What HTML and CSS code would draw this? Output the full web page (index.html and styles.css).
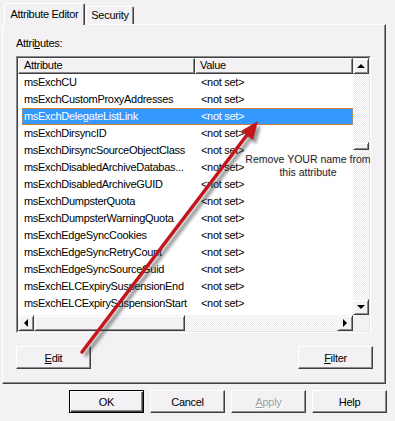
FILE: index.html
```html
<!DOCTYPE html>
<html>
<head>
<meta charset="utf-8">
<title>Properties</title>
<link rel="stylesheet" href="styles.css">
</head>
<body>
<div class="dialog">
  <div class="tabs">
    <div class="tab active">Attribute Editor</div>
    <div class="tab">Security</div>
  </div>
  <div class="panel">
    <div class="label">Attri<u>b</u>utes:</div>
    <div class="listbox">
      <div class="listinner">
        <div class="lv">
          <div class="header">
            <div class="hcell c1">Attribute</div>
            <div class="hcell c2">Value</div>
          </div>
          <div class="rows">
            <div class="row"><span class="a">msExchCU</span><span class="v">&lt;not set&gt;</span></div>
            <div class="row"><span class="a">msExchCustomProxyAddresses</span><span class="v">&lt;not set&gt;</span></div>
            <div class="row sel"><span class="a">msExchDelegateListLink</span><span class="v">&lt;not set&gt;</span></div>
            <div class="row"><span class="a">msExchDirsyncID</span><span class="v">&lt;not set&gt;</span></div>
            <div class="row"><span class="a">msExchDirsyncSourceObjectClass</span><span class="v">&lt;not set&gt;</span></div>
            <div class="row"><span class="a">msExchDisabledArchiveDatabas...</span><span class="v">&lt;not set&gt;</span></div>
            <div class="row"><span class="a">msExchDisabledArchiveGUID</span><span class="v">&lt;not set&gt;</span></div>
            <div class="row"><span class="a">msExchDumpsterQuota</span><span class="v">&lt;not set&gt;</span></div>
            <div class="row"><span class="a">msExchDumpsterWarningQuota</span><span class="v">&lt;not set&gt;</span></div>
            <div class="row"><span class="a">msExchEdgeSyncCookies</span><span class="v">&lt;not set&gt;</span></div>
            <div class="row"><span class="a">msExchEdgeSyncRetryCount</span><span class="v">&lt;not set&gt;</span></div>
            <div class="row"><span class="a">msExchEdgeSyncSourceGuid</span><span class="v">&lt;not set&gt;</span></div>
            <div class="row"><span class="a">msExchELCExpirySuspensionEnd</span><span class="v">&lt;not set&gt;</span></div>
            <div class="row"><span class="a">msExchELCExpirySuspensionStart</span><span class="v">&lt;not set&gt;</span></div>
          </div>
        </div>
        <div class="vscroll">
          <div class="sbtn up"></div>
          <div class="track vtrack"><div class="thumb vthumb"></div></div>
          <div class="sbtn down"></div>
        </div>
        <div class="hscroll">
          <div class="sbtn left"></div>
          <div class="thumb hthumb"></div>
          <div class="track htrack"></div>
          <div class="sbtn right"></div>
        </div>
        <div class="corner"></div>
      </div>
    </div>
    <div class="btnrow">
      <button class="btn"><u>E</u>dit</button>
      <button class="btn"><u>F</u>ilter</button>
    </div>
  </div>
  <div class="footer">
    <button class="btn default">OK</button>
    <button class="btn">Cancel</button>
    <button class="btn disabled"><u>A</u>pply</button>
    <button class="btn">Help</button>
  </div>
  <svg class="overlay" width="395" height="421" viewBox="0 0 395 421">
    <defs>
      <filter id="soft" x="-20%" y="-20%" width="140%" height="140%">
        <feGaussianBlur stdDeviation="1.8"/>
      </filter>
    </defs>
    <g filter="url(#soft)" opacity="0.55" transform="translate(3,4)">
      <line x1="82" y1="352" x2="250" y2="131" stroke="#444" stroke-width="4"/>
      <polygon points="258,121 253,140 241,131" fill="#444"/>
    </g>
    <line x1="82" y1="352" x2="250" y2="131" stroke="#c3161b" stroke-width="3.5" stroke-linecap="round"/>
    <polygon points="258,121 253,140 241,131" fill="#c3161b"/>
  </svg>
  <div class="note">Remove YOUR name from<br>this attribute</div>
</div>
</body>
</html>
```
FILE: styles.css
```css
* { box-sizing: border-box; }
html, body { margin: 0; padding: 0; }
body {
  background: #f4f1f4;
  font-family: "Liberation Sans", Arial, sans-serif;
  font-size: 11px;
  letter-spacing: -0.3px;
  color: #000;
}
.dialog {
  position: relative;
  width: 395px;
  height: 421px;
  overflow: hidden;
}
.tabs {
  display: flex;
  align-items: flex-end;
  height: 24px;
  padding-left: 4px;
}
.tab {
  height: 18px;
  width: 48px;
  margin-left: 1px;
  padding-top: 2px;
  text-align: center;
  line-height: 13px;
  background: #f4f1f4;
  border: 1px solid;
  border-bottom: none;
  border-color: #fff #404040 transparent #fff;
  box-shadow: inset -1px 0 #8c8a8c;
  border-radius: 2px 2px 0 0;
}
.tab.active {
  width: 81px;
  height: 22px;
  margin-left: 0;
  margin-bottom: -1px;
  padding-top: 4px;
  position: relative;
  z-index: 1;
}
.panel {
  width: 384px;
  height: 360px;
  margin-left: 2px;
  border: 1px solid;
  border-color: #fff #404040 #404040 #fff;
  box-shadow: inset -1px -1px #8c8a8c;
  padding: 12px 0 0 13px;
}
.label {
  line-height: 13px;
  height: 13px;
}
.listbox {
  width: 355px;
  height: 277px;
  margin-top: 6px;
  border: 1px solid;
  border-color: #8c8a8c #fff #fff #8c8a8c;
}
.listinner {
  height: 100%;
  border: 1px solid;
  border-color: #404040 #e6e3e6 #e6e3e6 #404040;
  display: grid;
  grid-template-columns: 335px 16px;
  grid-template-rows: 257px 16px;
  background: #fff;
}
.lv { overflow: hidden; }
.header { display: flex; height: 16px; }
.hcell {
  height: 16px;
  line-height: 12px;
  background: #f4f1f4;
  border: 1px solid;
  border-color: #fff #404040 #404040 #fff;
  box-shadow: inset -1px -1px #8c8a8c;
  white-space: nowrap;
}
.c1 { width: 177px; padding-left: 5px; }
.c2 { width: 158px; padding-left: 4px; }
.rows { padding-left: 4px; }
.row {
  display: grid;
  grid-template-columns: 173px 1fr;
  height: 17px;
  line-height: 17px;
  white-space: nowrap;
}
.row .a { padding-left: 2px; overflow: hidden; }
.row .v { padding-left: 6px; }
.row.sel {
  background: #3399ff;
  color: #fff;
  outline: 1px dotted #e08a3c;
  outline-offset: -1px;
}
.vscroll { display: flex; flex-direction: column; }
.hscroll { display: flex; }
.sbtn {
  width: 16px;
  height: 16px;
  flex: none;
  background: #f4f1f4;
  border: 1px solid;
  border-color: #f4f1f4 #404040 #404040 #f4f1f4;
  box-shadow: inset 1px 1px #fff, inset -1px -1px #8c8a8c;
  display: flex;
  align-items: center;
  justify-content: center;
}
.sbtn::after { content: ""; width: 0; height: 0; }
.up::after {
  border-left: 4px solid transparent;
  border-right: 4px solid transparent;
  border-bottom: 4px solid #000;
  margin-top: -1px;
}
.down::after {
  border-left: 4px solid transparent;
  border-right: 4px solid transparent;
  border-top: 4px solid #000;
}
.left::after {
  border-top: 4px solid transparent;
  border-bottom: 4px solid transparent;
  border-right: 4px solid #000;
  margin-left: -1px;
}
.right::after {
  border-top: 4px solid transparent;
  border-bottom: 4px solid transparent;
  border-left: 4px solid #000;
}
.track {
  flex: 1;
  background: repeating-conic-gradient(#fff 0 25%, #ebe8eb 0 50%) 0 0 / 2px 2px;
}
.thumb {
  background: #f4f1f4;
  border: 1px solid;
  border-color: #f4f1f4 #404040 #404040 #f4f1f4;
  box-shadow: inset 1px 1px #fff, inset -1px -1px #8c8a8c;
}
.vthumb { height: 8px; margin-top: 68px; }
.hthumb { width: 151px; flex: none; }
.corner { background: #f4f1f4; }
.btnrow {
  width: 357px;
  margin-top: 13px;
  display: flex;
  justify-content: space-between;
}
.btn {
  width: 75px;
  height: 23px;
  padding: 0;
  background: #f4f1f4;
  font-family: "Liberation Sans", Arial, sans-serif;
  font-size: 11px;
  letter-spacing: -0.3px;
  color: #000;
  border: 1px solid;
  border-color: #fff #404040 #404040 #fff;
  box-shadow: inset -1px -1px #8c8a8c;
}
.btn.default {
  border-color: #000;
  box-shadow: inset 1px 1px #fff, inset -1px -1px #404040, inset -2px -2px #8c8a8c;
}
.btn.disabled {
  color: #a09ea0;
  text-shadow: 1px 1px #fff;
}
.footer {
  display: flex;
  justify-content: flex-end;
  gap: 6px;
  padding-right: 8px;
  margin-top: 6px;
}
.overlay {
  position: absolute;
  top: 0;
  left: 0;
  pointer-events: none;
}
.note {
  position: absolute;
  left: 240px;
  top: 153px;
  width: 136px;
  text-align: center;
  font-size: 10.5px;
  line-height: 13px;
  letter-spacing: 0;
  color: #14224a;
  text-shadow: 0 0 3px rgba(255, 226, 120, 0.55);
}
```
